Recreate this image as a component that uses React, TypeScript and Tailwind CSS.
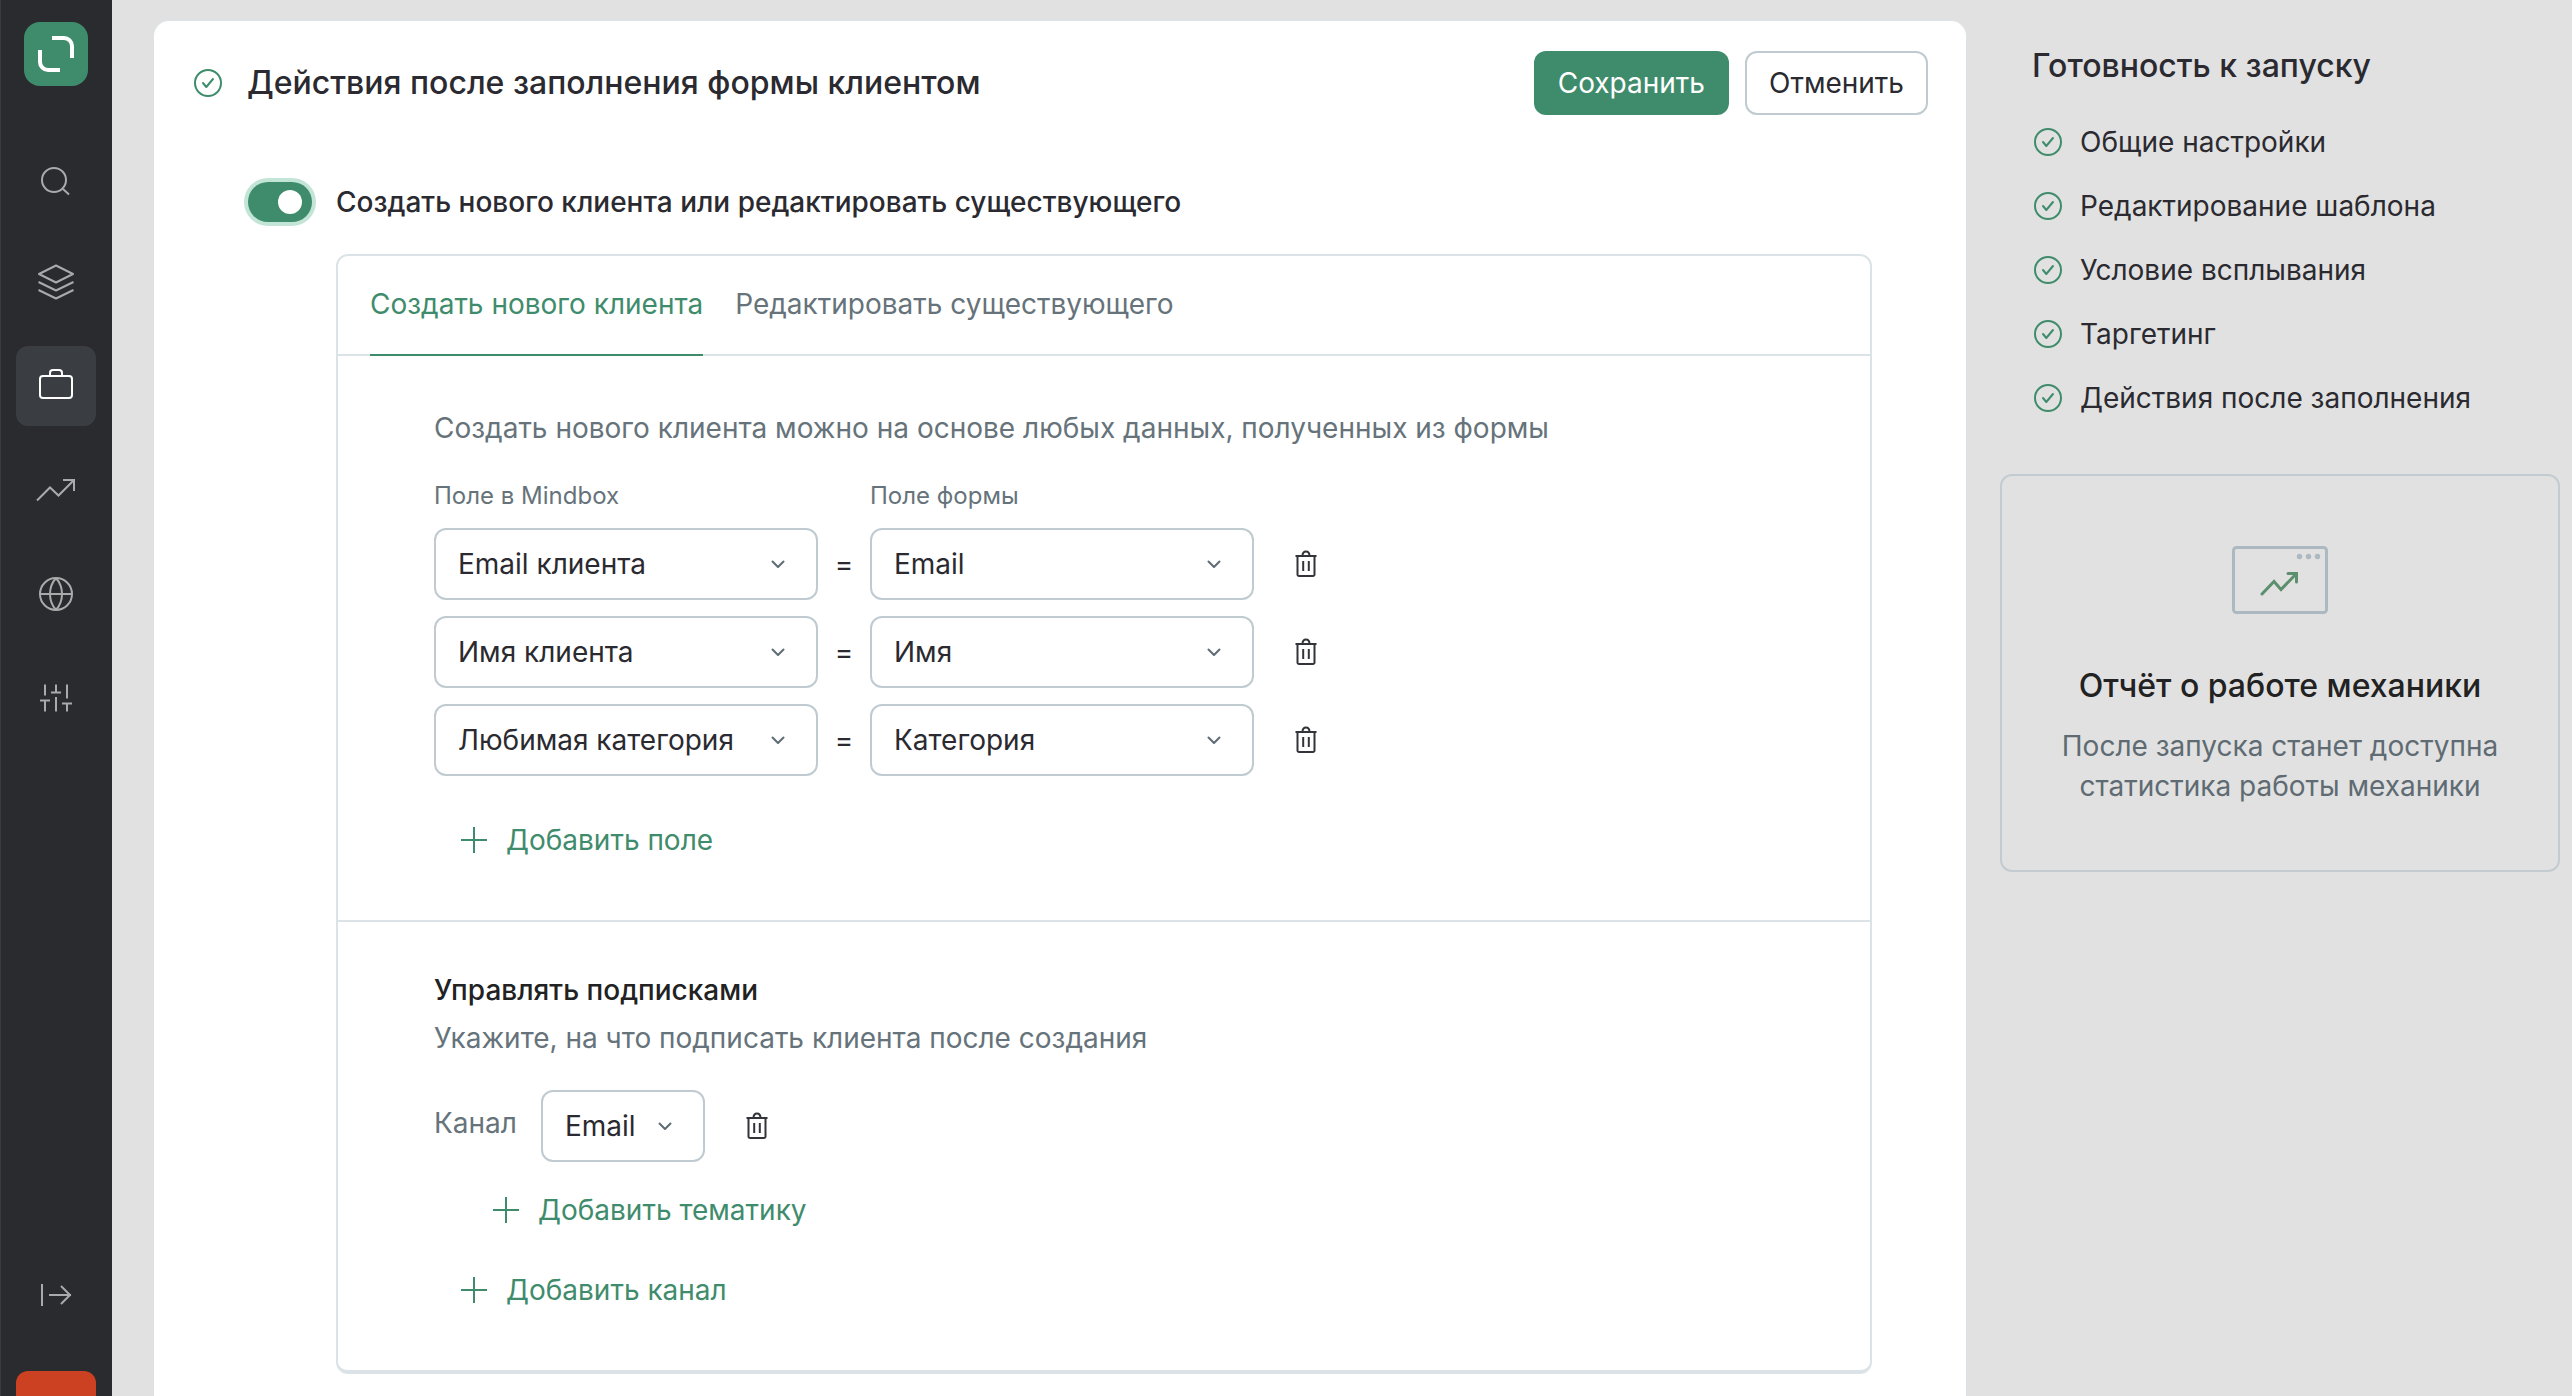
import React, { useState } from 'react';

type IconProps = { className?: string };

const Svg = ({ size = 32, sw = 2, className = '', children }: { size?: number; sw?: number; className?: string; children: React.ReactNode }) => (
  <svg width={size} height={size} viewBox={`0 0 ${size} ${size}`} fill="none" stroke="currentColor" strokeWidth={sw} className={`shrink-0 ${className}`} aria-hidden="true">
    {children}
  </svg>
);

const CheckCircle = ({ className = 'text-[#3f8c6c]' }: IconProps) => (
  <Svg size={28} className={className}>
    <circle cx="14" cy="14" r="13" />
    <path d="M9 14l3.300 4L19 10" strokeLinecap="round" strokeLinejoin="round" />
  </Svg>
);

const Chevron = ({ className = '' }: IconProps) => (
  <Svg size={32} className={`text-[#5f6c73] ${className}`}>
    <path d="M10.500 13.500L16 19l5.500-5.500" strokeLinecap="round" strokeLinejoin="round" />
  </Svg>
);

const Trash = () => (
  <Svg size={32} className="text-[#33343a]">
    <path d="M5.500 8h21M7.500 8v18.500a1.500 1.500 0 0 0 1.500 1.500h14a1.500 1.500 0 0 0 1.500-1.500V8M12.500 8c0-3 1.500-4.500 3.500-4.500s3.500 1.500 3.500 4.500M13.200 13v10M18.800 13v10" />
  </Svg>
);

const Plus = () => (
  <Svg size={32}>
    <path d="M16 3v26M3 16h26" />
  </Svg>
);

const Logo = () => (
  <a href="#home" aria-label="Mindbox" className="flex size-16 items-center justify-center rounded-2xl bg-[#3f8c6c] text-white">
    <Svg size={40} sw={4}>
      <path d="M16 4h12a8 8 0 0 1 8 8v12M4 16v12a8 8 0 0 0 8 8h12" />
    </Svg>
  </a>
);

const navItems = [
  {
    label: 'Поиск',
    icon: (
      <Svg size={40}>
        <circle cx="18" cy="22" r="12" />
        <path d="M27 31l6 5.500" />
      </Svg>
    ),
  },
  {
    label: 'Данные',
    icon: (
      <Svg size={40}>
        <path d="M20 3.500L37 12l-17 8.500L3 12zM2.500 20L20 28.500 37.500 20M2.500 28L20 36.500 37.500 28" strokeLinejoin="round" />
      </Svg>
    ),
  },
  {
    label: 'Кампании',
    active: true,
    icon: (
      <Svg size={40}>
        <rect x="4" y="10" width="32" height="22" rx="3" />
        <path d="M14 10V7a3 3 0 0 1 3-3h6a3 3 0 0 1 3 3v3" />
      </Svg>
    ),
  },
  {
    label: 'Отчёты',
    icon: (
      <Svg size={40}>
        <path d="M1 30.500L14 17.500l8.500 8L38 10M27 10h11v11" />
      </Svg>
    ),
  },
  {
    label: 'Сайт',
    icon: (
      <Svg size={40}>
        <circle cx="20" cy="20" r="16" />
        <path d="M4 20h32M20 4c-8 9-8 23 0 32M20 4c8 9 8 23 0 32" />
      </Svg>
    ),
  },
  {
    label: 'Настройки',
    icon: (
      <Svg size={40}>
        <path d="M9 6.500v11M4 22.500h10M9 22.500v11M20 6.500v8M15 14.500h10M20 19v14.500M31 6.500v14M26 25.500h10M31 25.500v8" />
      </Svg>
    ),
  },
];

function Sidebar() {
  return (
    <nav className="flex w-28 shrink-0 flex-col items-center bg-[#2a2b2f] pt-[22px] text-[#a9aaab] shadow-[inset_1px_0_0_#3b3c40]">
      <Logo />
      <div className="mt-[52px] flex flex-col gap-6">
        {navItems.map((item) => (
          <a
            key={item.label}
            href="#section"
            aria-label={item.label}
            className={`flex size-20 items-center justify-center rounded-xl ${item.active ? 'bg-[#3a3d42] text-white' : ''}`}
          >
            {item.icon}
          </a>
        ))}
      </div>
      <button type="button" aria-label="Развернуть меню" className="mt-auto flex size-20 items-center justify-center">
        <Svg size={40}>
          <path d="M6 9v22M13 20h22M25 11l9 9-9 9" />
        </Svg>
      </button>
      <button type="button" aria-label="Уведомления" className="mt-9 h-[25px] w-20 rounded-t-xl bg-[#cb4122]" />
    </nav>
  );
}

function Select({ label, value, className }: { label: string; value: string; className: string }) {
  return (
    <div className={`relative shrink-0 ${className}`}>
      <select
        aria-label={label}
        defaultValue={value}
        className="h-18 w-full appearance-none rounded-xl border-2 border-[#bfcad1] bg-white pr-12 pl-[22px] text-[28px] leading-10 text-[#2a2a30]"
      >
        <option>{value}</option>
      </select>
      <Chevron className="pointer-events-none absolute top-5 right-6" />
    </div>
  );
}

const AddButton = ({ children, className = '' }: { children: React.ReactNode; className?: string }) => (
  <button type="button" className={`flex h-16 items-center gap-4 px-6 text-[#3f8c6c] ${className}`}>
    <Plus />
    {children}
  </button>
);

const TrashButton = () => (
  <button type="button" aria-label="Удалить" className="flex size-18 items-center justify-center">
    <Trash />
  </button>
);

const rows = [
  ['Email клиента', 'Email'],
  ['Имя клиента', 'Имя'],
  ['Любимая категория', 'Категория'],
];

const steps = ['Общие настройки', 'Редактирование шаблона', 'Условие всплывания', 'Таргетинг', 'Действия после заполнения'];

export default function App() {
  const [enabled, setEnabled] = useState(true);
  return (
    <div className="flex h-screen overflow-hidden bg-[#e1e1e1] font-['Inter',sans-serif] text-[28px] leading-10 text-[#2a2a30]">
      <Sidebar />
      <main className="mt-5 ml-[41px] min-w-0 flex-1 rounded-t-2xl border border-b-0 border-[#dce3e6] bg-white pt-[30px] pr-[38px] pl-10">
        <header className="flex items-center">
          <CheckCircle />
          <h1 className="ml-[25px] text-[32px] font-[550]">Действия после заполнения формы клиентом</h1>
          <div className="ml-auto flex gap-4">
            <button type="button" className="h-16 rounded-xl bg-[#3f8c6c] px-6 text-white">Сохранить</button>
            <button type="button" className="h-16 rounded-xl border-2 border-[#bfcad1] px-[22px]">Отменить</button>
          </div>
        </header>

        <label className="mt-[67px] ml-[54px] flex w-fit items-center gap-6 font-medium">
          <input type="checkbox" role="switch" checked={enabled} onChange={() => setEnabled(!enabled)} className="peer sr-only" />
          <span className="flex h-10 w-16 items-center rounded-full bg-[#a9b5bc] px-2.5 ring-4 ring-[#c3e5d8] peer-checked:justify-end peer-checked:bg-[#3f8c6c]">
            <span className="size-6 rounded-full bg-white" />
          </span>
          Создать нового клиента или редактировать существующего
        </label>

        <section className="mt-8 mr-14 ml-[142px] rounded-xl border-2 border-b-4 border-[#dce3e6]">
          <div role="tablist" className="flex h-[100px] gap-8 border-b-2 border-[#dce3e6] px-8">
            <button type="button" role="tab" aria-selected="true" className="-mb-0.5 border-b-2 border-[#3f8c6c] pb-0.5 text-[#3f8c6c]">
              Создать нового клиента
            </button>
            <button type="button" role="tab" aria-selected="false" className="-mb-0.5 border-b-2 border-transparent pb-0.5 text-[#66737a]">
              Редактировать существующего
            </button>
          </div>

          <div className="border-b-2 border-[#dce3e6] px-24 pt-13 pb-12">
            <p className="text-[#66737a]">Создать нового клиента можно на основе любых данных, полученных из формы</p>
            <div className="mt-8 flex gap-13 text-2xl leading-8 text-[#66737a]">
              <span className="w-96">Поле в Mindbox</span>
              <span>Поле формы</span>
            </div>
            <div className="mt-4 flex flex-col gap-4">
              {rows.map(([field, source]) => (
                <div key={field} className="flex items-center">
                  <Select label="Поле в Mindbox" value={field} className="w-96" />
                  <span className="w-13 text-center">=</span>
                  <Select label="Поле формы" value={source} className="w-96" />
                  <div className="ml-4">
                    <TrashButton />
                  </div>
                </div>
              ))}
            </div>
            <AddButton className="mt-8">Добавить поле</AddButton>
          </div>

          <div className="px-24 pt-12 pb-12">
            <h2 className="font-medium text-[#222222]">Управлять подписками</h2>
            <p className="mt-2 text-[#66737a]">Укажите, на что подписать клиента после создания</p>
            <div className="mt-8 flex items-center">
              <span className="pb-1.5 text-[#66737a]">Канал</span>
              <Select label="Канал" value="Email" className="ml-6 w-41" />
              <div className="ml-4">
                <TrashButton />
              </div>
            </div>
            <AddButton className="mt-4 ml-8">Добавить тематику</AddButton>
            <AddButton className="mt-4">Добавить канал</AddButton>
          </div>
        </section>
      </main>

      <aside className="w-[605px] shrink-0 pt-[46px] pr-3 pl-[33px]">
        <h2 className="ml-8 text-[32px] font-[550]">Готовность к запуску</h2>
        <ul className="mt-9 ml-[34px] flex flex-col gap-6">
          {steps.map((step) => (
            <li key={step} className="flex items-center gap-[18px]">
              <CheckCircle />
              {step}
            </li>
          ))}
        </ul>
        <section className="mt-14 flex flex-col items-center rounded-xl border-2 border-[#c4cbd0] px-13 pt-[70px] pb-16 text-center">
          <svg width="96" height="68" viewBox="0 0 96 68" fill="none" aria-hidden="true">
            <rect x="1.500" y="1.500" width="93" height="65" rx="3" stroke="#adb9c0" strokeWidth="3" />
            <g fill="#adb9c0">
              <circle cx="67.500" cy="10.500" r="2.700" />
              <circle cx="76.500" cy="10.500" r="2.700" />
              <circle cx="85.500" cy="10.500" r="2.700" />
            </g>
            <path d="M30 48l12-12.500 7 8L64 28M56 27.500h8.500V36" stroke="#5b8f6d" strokeWidth="3" strokeLinecap="round" />
          </svg>
          <h2 className="mt-13 text-[32px] font-[550] text-[#222222]">Отчёт о работе механики</h2>
          <p className="mt-5 text-[#5f6b73]">После запуска станет доступна статистика работы механики</p>
        </section>
      </aside>
    </div>
  );
}
